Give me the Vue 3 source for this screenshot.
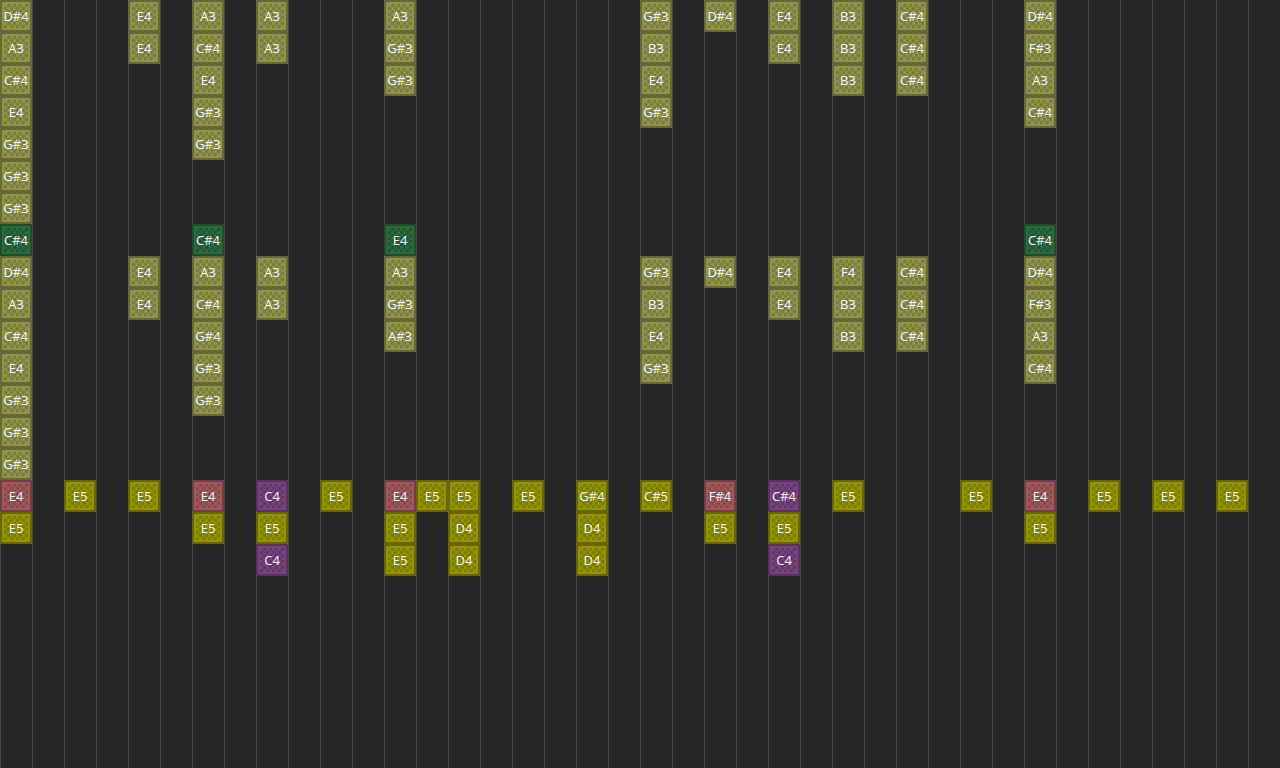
<script setup>
const colors = { o: 'olive', g: 'green', r: 'red', y: 'yellow', p: 'purple' }
const cols = [
  [0, 0, 'o', 'D#4 A3 C#4 E4 G#3 G#3 G#3'],
  [0, 7, 'g', 'C#4'],
  [0, 8, 'o', 'D#4 A3 C#4 E4 G#3 G#3 G#3'],
  [0, 15, 'r', 'E4'],
  [0, 16, 'y', 'E5'],
  [2, 15, 'y', 'E5'],
  [4, 0, 'o', 'E4 E4'],
  [4, 8, 'o', 'E4 E4'],
  [4, 15, 'y', 'E5'],
  [6, 0, 'o', 'A3 C#4 E4 G#3 G#3'],
  [6, 7, 'g', 'C#4'],
  [6, 8, 'o', 'A3 C#4 G#4 G#3 G#3'],
  [6, 15, 'r', 'E4'],
  [6, 16, 'y', 'E5'],
  [8, 0, 'o', 'A3 A3'],
  [8, 8, 'o', 'A3 A3'],
  [8, 15, 'p', 'C4'],
  [8, 16, 'y', 'E5'],
  [8, 17, 'p', 'C4'],
  [10, 15, 'y', 'E5'],
  [12, 0, 'o', 'A3 G#3 G#3'],
  [12, 7, 'g', 'E4'],
  [12, 8, 'o', 'A3 G#3 A#3'],
  [12, 15, 'r', 'E4'],
  [12, 16, 'y', 'E5 E5'],
  [13, 15, 'y', 'E5'],
  [14, 15, 'y', 'E5 D4 D4'],
  [16, 15, 'y', 'E5'],
  [18, 15, 'y', 'G#4 D4 D4'],
  [20, 0, 'o', 'G#3 B3 E4 G#3'],
  [20, 8, 'o', 'G#3 B3 E4 G#3'],
  [20, 15, 'y', 'C#5'],
  [22, 0, 'o', 'D#4'],
  [22, 8, 'o', 'D#4'],
  [22, 15, 'r', 'F#4'],
  [22, 16, 'y', 'E5'],
  [24, 0, 'o', 'E4 E4'],
  [24, 8, 'o', 'E4 E4'],
  [24, 15, 'p', 'C#4'],
  [24, 16, 'y', 'E5'],
  [24, 17, 'p', 'C4'],
  [26, 0, 'o', 'B3 B3 B3'],
  [26, 8, 'o', 'F4 B3 B3'],
  [26, 15, 'y', 'E5'],
  [28, 0, 'o', 'C#4 C#4 C#4'],
  [28, 8, 'o', 'C#4 C#4 C#4'],
  [30, 15, 'y', 'E5'],
  [32, 0, 'o', 'D#4 F#3 A3 C#4'],
  [32, 7, 'g', 'C#4'],
  [32, 8, 'o', 'D#4 F#3 A3 C#4'],
  [32, 15, 'r', 'E4'],
  [32, 16, 'y', 'E5'],
  [34, 15, 'y', 'E5'],
  [36, 15, 'y', 'E5'],
  [38, 15, 'y', 'E5'],
]
const notes = cols.flatMap(([col, row, c, text]) =>
  text.split(' ').map((label, i) => ({
    id: `${col}-${row + i}`,
    label,
    cls: colors[c],
    place: { gridColumn: col + 1, gridRow: row + i + 1 },
  }))
)
</script>

<template>
  <div class="roll">
    <div v-for="n in notes" :key="n.id" class="note" :class="n.cls" :style="n.place">{{ n.label }}</div>
  </div>
</template>

<style scoped>
.roll {
  width: 1280px;
  height: 768px;
  overflow: hidden;
  display: grid;
  grid-template-columns: repeat(40, 32px);
  grid-template-rows: repeat(24, 32px);
  background-color: #272729;
  background-image: linear-gradient(90deg, #4a4a4a 1px, transparent 1px);
  background-size: 32px 100%;
  background-position: 32px 0;
}
.note {
  box-sizing: border-box;
  border: 2px solid var(--e);
  padding: 2px;
  background:
    conic-gradient(var(--b) 25%, transparent 0 50%, var(--b) 0 75%, transparent 0) 0 0 / 6px 6px content-box,
    linear-gradient(var(--a), var(--a)) padding-box;
  display: flex;
  align-items: center;
  justify-content: center;
  color: #f8f8f8;
  font: 13px "Open Sans", sans-serif;
}
.olive { --a: #8f9449; --b: #777c3b; --e: #666b37; }
.green { --a: #2b6c3c; --b: #1f5730; --e: #214e2d; }
.red { --a: #a05559; --b: #87474b; --e: #703f43; }
.yellow { --a: #929100; --b: #7a7900; --e: #676600; }
.purple { --a: #78427e; --b: #63366a; --e: #5a335f; }
</style>
